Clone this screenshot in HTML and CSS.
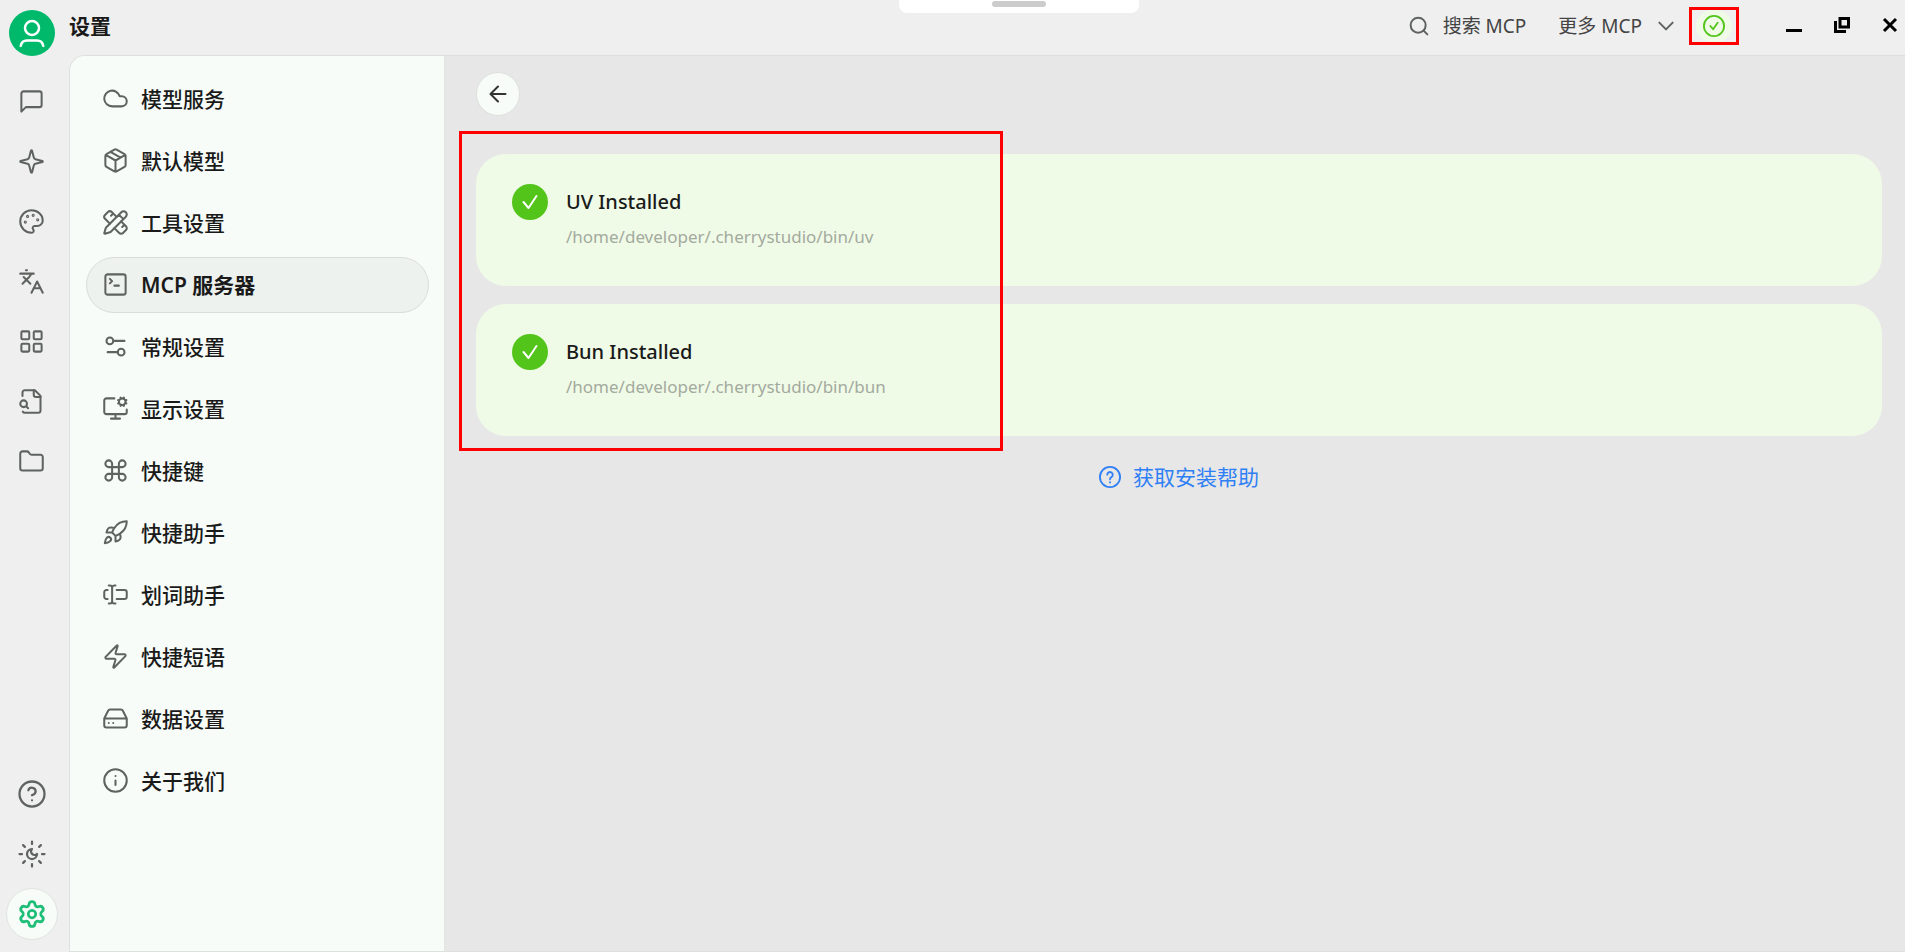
FILE: index.html
```html
<!DOCTYPE html>
<html lang="zh-CN">

<head>
	<title>设置</title>
	<meta charset="utf-8" />
	<meta name="viewport" content="width=device-width, initial-scale=1">
	<link rel="stylesheet" href="styles.css">
</head>

<body>
	<div class="pull-tab"><span class="pull-handle"></span></div>

	<!-- Left icon rail -->
	<aside class="rail">
		<button class="avatar" aria-label="用户">
			<svg viewBox="0 0 24 24"><circle cx="12" cy="8" r="5.6"/><path d="M3 22.300c.6-3 2.400-4.300 5-4.300h8c2.600 0 4.400 1.300 5 4.300"/></svg>
		</button>
		<nav class="rail-group">
			<a href="#" class="rail-item" aria-label="助手"><svg class="icon" viewBox="0 0 24 24"><path d="M21 15a2 2 0 0 1-2 2H7l-4 4V5a2 2 0 0 1 2-2h14a2 2 0 0 1 2 2z"/></svg></a>
			<a href="#" class="rail-item" aria-label="智能体"><svg class="icon" viewBox="0 0 24 24"><path d="M9.937 15.5A2 2 0 0 0 8.5 14.063l-6.135-1.582a.5.5 0 0 1 0-.962L8.5 9.936A2 2 0 0 0 9.937 8.5l1.582-6.135a.5.5 0 0 1 .963 0L14.063 8.5A2 2 0 0 0 15.5 9.937l6.135 1.581a.5.5 0 0 1 0 .964L15.5 14.063a2 2 0 0 0-1.437 1.437l-1.582 6.135a.5.5 0 0 1-.963 0z"/></svg></a>
			<a href="#" class="rail-item" aria-label="绘画"><svg class="icon" viewBox="0 0 24 24"><path d="M12 22a1 1 0 0 1 0-20 10 9 0 0 1 10 9 5 5 0 0 1-5 5h-2.25a1.75 1.75 0 0 0-1.4 2.8l.3.4a1.75 1.75 0 0 1-1.4 2.8z"/><circle cx="13.5" cy="6.5" r=".5"/><circle cx="17.5" cy="10.5" r=".5"/><circle cx="6.5" cy="12.5" r=".5"/><circle cx="8.5" cy="7.5" r=".5"/></svg></a>
			<a href="#" class="rail-item" aria-label="翻译"><svg class="icon" viewBox="0 0 24 24"><path d="m5 8 6 6M4 14l6-6 2-3M2 5h12M7 2h1M22 22l-5-10-5 10M14 18h6"/></svg></a>
			<a href="#" class="rail-item" aria-label="小程序"><svg class="icon" viewBox="0 0 24 24"><rect width="7" height="7" x="3" y="3" rx="1"/><rect width="7" height="7" x="14" y="3" rx="1"/><rect width="7" height="7" x="14" y="14" rx="1"/><rect width="7" height="7" x="3" y="14" rx="1"/></svg></a>
			<a href="#" class="rail-item" aria-label="知识库"><svg class="icon" viewBox="0 0 24 24"><path d="M14 2v4a2 2 0 0 0 2 2h4"/><path d="M4.268 21a2 2 0 0 0 1.727 1H18a2 2 0 0 0 2-2V7l-5-5H6a2 2 0 0 0-2 2v3"/><path d="m9 18-1.5-1.5"/><circle cx="5" cy="14" r="3"/></svg></a>
			<a href="#" class="rail-item" aria-label="文件"><svg class="icon" viewBox="0 0 24 24"><path d="M20 20a2 2 0 0 0 2-2V8a2 2 0 0 0-2-2h-7.9a2 2 0 0 1-1.69-.9L9.6 3.9A2 2 0 0 0 7.93 3H4a2 2 0 0 0-2 2v13a2 2 0 0 0 2 2Z"/></svg></a>
		</nav>
		<nav class="rail-group rail-bottom">
			<a href="#" class="rail-item" aria-label="帮助"><svg class="icon icon-lg" viewBox="0 0 24 24"><circle cx="12" cy="12" r="10"/><path d="M9.09 9a3 3 0 0 1 5.83 1c0 2-3 3-3 3M12 17h.01"/></svg></a>
			<button class="rail-item" aria-label="主题"><svg class="icon icon-lg" viewBox="0 0 24 24"><path d="M12 8a2.83 2.83 0 0 0 4 4 4 4 0 1 1-4-4M12 2v2M12 20v2M4.9 4.9l1.4 1.4M17.7 17.7l1.4 1.4M2 12h2M20 12h2M6.3 17.7l-1.4 1.4M19.1 4.9l-1.4 1.4"/></svg></button>
			<a href="#" class="rail-item active" aria-label="设置"><svg class="icon icon-lg" viewBox="0 0 24 24"><path d="M9.671 4.136a2.34 2.34 0 0 1 4.659 0 2.34 2.34 0 0 0 3.319 1.915 2.34 2.34 0 0 1 2.33 4.033 2.34 2.34 0 0 0 0 3.831 2.34 2.34 0 0 1-2.33 4.033 2.34 2.34 0 0 0-3.319 1.915 2.34 2.34 0 0 1-4.659 0 2.34 2.34 0 0 0-3.32-1.915 2.34 2.34 0 0 1-2.33-4.033 2.34 2.34 0 0 0 0-3.831A2.34 2.34 0 0 1 6.35 6.051a2.34 2.34 0 0 0 3.319-1.915"/><circle cx="12" cy="12" r="3"/></svg></a>
		</nav>
	</aside>

	<div class="window">
		<header class="topbar">
			<h1>设置</h1>
			<div class="top-actions">
				<button class="top-btn"><svg class="icon icon-sm" viewBox="0 0 24 24"><circle cx="11" cy="11" r="9"/><path d="m22 22-4.5-4.5"/></svg>搜索 MCP</button>
				<button class="top-btn">更多 MCP<svg class="icon icon-sm" viewBox="0 0 24 24"><path d="m4 8 8 8 8-8"/></svg></button>
				<div class="status-mark">
					<button class="status-btn" aria-label="已安装"><svg viewBox="0 0 24 24"><circle cx="12" cy="12" r="11"/><path d="m8 12 3 3.500 5-7"/></svg></button>
				</div>
			</div>
			<div class="win-controls">
				<button aria-label="最小化"><svg viewBox="0 0 16 16"><path d="M0 13.500h16"/></svg></button>
				<button aria-label="还原"><svg viewBox="0 0 16 16"><path d="M6 1.500h8.500V10H6zM1.500 4v10.500H12"/></svg></button>
				<button aria-label="关闭"><svg viewBox="0 0 16 16"><path d="m2 2 12 12M14 2 2 14"/></svg></button>
			</div>
		</header>

		<div class="content">
			<!-- Settings menu -->
			<nav class="menu">
				<a href="#"><svg class="icon" viewBox="0 0 24 24"><path d="M17.5 19H9a7 7 0 1 1 6.71-9h1.79a4.5 4.5 0 1 1 0 9Z"/></svg>模型服务</a>
				<a href="#"><svg class="icon" viewBox="0 0 24 24"><path d="M11 21.73a2 2 0 0 0 2 0l7-4A2 2 0 0 0 21 16V8a2 2 0 0 0-1-1.73l-7-4a2 2 0 0 0-2 0l-7 4A2 2 0 0 0 3 8v8a2 2 0 0 0 1 1.73zM12 22V12M3.29 7 12 12l8.71-5M7.5 4.27l9 5.15"/></svg>默认模型</a>
				<a href="#"><svg class="icon" viewBox="0 0 24 24"><path d="M13 7 8.7 2.7a2.41 2.41 0 0 0-3.4 0L2.7 5.3a2.41 2.41 0 0 0 0 3.4L7 13M8 6l2-2M18 16l2-2M17 11l4.3 4.3c.94.94.94 2.46 0 3.4l-2.6 2.6c-.94.94-2.46.94-3.4 0L11 17"/><path d="M21.174 6.812a1 1 0 0 0-3.986-3.987L3.842 16.174a2 2 0 0 0-.5.83l-1.321 4.352a.5.5 0 0 0 .623.622l4.353-1.32a2 2 0 0 0 .83-.497zM15 5l4 4"/></svg>工具设置</a>
				<a href="#" class="active"><svg class="icon" viewBox="0 0 24 24"><path d="m7 11 2-2-2-2M11 13h4"/><rect width="18" height="18" x="3" y="3" rx="2"/></svg>MCP 服务器</a>
				<a href="#"><svg class="icon" viewBox="0 0 24 24"><path d="M20 7h-9M14 17H5"/><circle cx="17" cy="17" r="3"/><circle cx="7" cy="7" r="3"/></svg>常规设置</a>
				<a href="#"><svg class="icon" viewBox="0 0 24 24"><path d="M12 17v4M8 21h8M22 13v2a2 2 0 0 1-2 2H4a2 2 0 0 1-2-2V5a2 2 0 0 1 2-2h7"/><path d="m14.305 7.53.923-.382M15.228 4.852l-.923-.383M16.852 3.228l-.383-.924M16.852 8.772l-.383.923M19.148 3.228l.383-.924M19.53 9.696l-.382-.924M20.772 4.852l.924-.383M20.772 7.148l.924.383"/><circle cx="18" cy="6" r="3"/></svg>显示设置</a>
				<a href="#"><svg class="icon" viewBox="0 0 24 24"><path d="M15 6v12a3 3 0 1 0 3-3H6a3 3 0 1 0 3 3V6a3 3 0 1 0-3 3h12a3 3 0 1 0-3-3"/></svg>快捷键</a>
				<a href="#"><svg class="icon" viewBox="0 0 24 24"><path d="M4.5 16.5c-1.5 1.26-2 5-2 5s3.74-.5 5-2c.71-.84.7-2.13-.09-2.91a2.18 2.18 0 0 0-2.91-.09zM12 15l-3-3a22 22 0 0 1 2-3.95A12.88 12.88 0 0 1 22 2c0 2.72-.78 7.5-6 11a22.35 22.35 0 0 1-4 2zM9 12H4s.55-3.03 2-4c1.62-1.08 5 0 5 0M12 15v5s3.03-.55 4-2c1.08-1.62 0-5 0-5"/></svg>快捷助手</a>
				<a href="#"><svg class="icon" viewBox="0 0 24 24"><path d="M12 20h-1a2 2 0 0 1-2-2 2 2 0 0 1-2 2H6M13 8h7a2 2 0 0 1 2 2v4a2 2 0 0 1-2 2h-7M5 16H4a2 2 0 0 1-2-2v-4a2 2 0 0 1 2-2h1M6 4h1a2 2 0 0 1 2 2 2 2 0 0 1 2-2h1M9 6v12"/></svg>划词助手</a>
				<a href="#"><svg class="icon" viewBox="0 0 24 24"><path d="M4 14a1 1 0 0 1-.78-1.63l9.9-10.2a.5.5 0 0 1 .86.46l-1.92 6.02A1 1 0 0 0 13 10h7a1 1 0 0 1 .78 1.63l-9.9 10.2a.5.5 0 0 1-.86-.46l1.92-6.02A1 1 0 0 0 11 14z"/></svg>快捷短语</a>
				<a href="#"><svg class="icon" viewBox="0 0 24 24"><path d="M22 12H2M5.45 5.11 2 12v6a2 2 0 0 0 2 2h16a2 2 0 0 0 2-2v-6l-3.45-6.89A2 2 0 0 0 16.76 4H7.24a2 2 0 0 0-1.79 1.11zM6 16h.01M10 16h.01"/></svg>数据设置</a>
				<a href="#"><svg class="icon" viewBox="0 0 24 24"><circle cx="12" cy="12" r="10"/><path d="M12 16v-4M12 8h.01"/></svg>关于我们</a>
			</nav>

			<main class="main">
				<button class="back" aria-label="返回"><svg class="icon icon-sm" viewBox="0 0 24 24"><path d="m12 21-9-9 9-9M21 12H3"/></svg></button>

				<section class="cards">
					<div class="card">
						<svg class="check" viewBox="0 0 36 36"><circle cx="18" cy="18" r="18"/><path d="m11.500 18 5 6 8-12"/></svg>
						<div>
							<h2>UV Installed</h2>
							<p>/home/developer/.cherrystudio/bin/uv</p>
						</div>
					</div>
					<div class="card">
						<svg class="check" viewBox="0 0 36 36"><circle cx="18" cy="18" r="18"/><path d="m11.500 18 5 6 8-12"/></svg>
						<div>
							<h2>Bun Installed</h2>
							<p>/home/developer/.cherrystudio/bin/bun</p>
						</div>
					</div>
					<div class="highlight"></div>
				</section>

				<a href="#" class="help-link"><svg viewBox="0 0 24 24"><circle cx="12" cy="12" r="11"/><path d="M9 9.500a3 3 0 1 1 4.500 2.700Q12 13 12 14.500M12 17.500v.5"/></svg>获取安装帮助</a>
			</main>
		</div>
	</div>
</body>

</html>
```

FILE: styles.css
```css
* {
	box-sizing: border-box;
}

html,
body {
	height: 100%;
	margin: 0;
}

body {
	display: flex;
	background-color: #efefef;
	color: #1a1a1a;
	font-family: "Noto Sans", "Noto Sans CJK SC", sans-serif;
	font-size: 21px;
}

button {
	padding: 0;
	border: none;
	background: none;
	color: inherit;
	font: inherit;
	cursor: pointer;
}

a {
	color: inherit;
	text-decoration: none;
}

h1,
h2,
p {
	margin: 0;
}

svg {
	display: block;
	flex: none;
	fill: none;
	stroke: currentColor;
	stroke-width: 2;
	stroke-linecap: round;
	stroke-linejoin: round;
}

.icon {
	width: 27px;
	height: 27px;
	stroke: #5f6360;
	stroke-width: 1.8;
}

.icon-sm {
	width: 20px;
	height: 20px;
	stroke-width: 2.4;
}

.icon-lg {
	width: 30px;
	height: 30px;
}

/* Tab hanging from the top edge of the screen */
.pull-tab {
	position: absolute;
	top: 0;
	left: 50%;
	width: 240px;
	height: 13px;
	margin-left: -54px;
	padding-top: 1px;
	border-radius: 0 0 8px 8px;
	background-color: #fff;
}

.pull-handle {
	display: block;
	width: 54px;
	height: 6px;
	margin: 0 auto;
	border-radius: 3px;
	background-color: #ccc;
}

/* Left rail */
.rail {
	display: flex;
	flex-direction: column;
	align-items: center;
	flex: none;
	width: 69px;
	padding: 10px 6px 12px 0;
}

.avatar {
	display: flex;
	align-items: center;
	justify-content: center;
	width: 46px;
	height: 46px;
	margin-bottom: 19px;
	border-radius: 50%;
	background-color: #00b96b;
	color: #fff;
}

.avatar svg {
	width: 30px;
	height: 30px;
}

.rail-group {
	display: flex;
	flex-direction: column;
	gap: 8px;
}

.rail-bottom {
	margin-top: auto;
}

.rail-item {
	display: flex;
	align-items: center;
	justify-content: center;
	width: 52px;
	height: 52px;
	border: 1px solid transparent;
	border-radius: 50%;
}

.rail-item.active {
	border-color: #e0e4e1;
	background-color: #f7fcf8;
}

.rail-item.active .icon {
	stroke: #1fbe78;
	stroke-width: 2.2;
}

/* Title bar */
.window {
	display: flex;
	flex-direction: column;
	flex: 1;
	min-width: 0;
}

.topbar {
	display: flex;
	align-items: center;
	height: 55px;
	padding: 0 7px 3px 0;
}

.topbar h1 {
	flex: 1;
	font-size: 21px;
	line-height: 30px;
	font-weight: bold;
}

.top-actions {
	display: flex;
	align-items: center;
	color: #444;
	font-size: 19px;
	line-height: 30px;
}

.top-btn {
	display: flex;
	align-items: center;
	gap: 14px;
	margin-right: 32px;
}

.top-btn + .top-btn {
	margin-right: 13px;
}

.status-mark {
	padding: 0 4px;
	border: 3px solid #f00;
}

.status-btn {
	display: flex;
	align-items: center;
	justify-content: center;
	width: 36px;
	height: 32px;
	border-radius: 16px;
	background-color: #f0fbe7;
	color: #52c41a;
}

.status-btn svg {
	width: 22px;
	height: 22px;
}

.win-controls {
	display: flex;
	gap: 32px;
	margin: 0 0 3px 47px;
	color: #000;
}

.win-controls svg {
	width: 16px;
	height: 16px;
	stroke-width: 3;
	stroke-linecap: butt;
	stroke-linejoin: miter;
}

/* Page body under the title bar */
.content {
	display: flex;
	flex: 1;
	overflow: hidden;
	border: 1px solid #dde0de;
	border-width: 1px 0 1px 1px;
	border-radius: 16px 0 0 0;
}

.menu {
	display: flex;
	flex-direction: column;
	gap: 6px;
	flex: none;
	width: 375px;
	padding: 15px 15px 15px 16px;
	border-right: 1px solid #e0e5e2;
	background-color: #f7fcf8;
}

.menu a {
	display: flex;
	align-items: center;
	gap: 12px;
	height: 56px;
	padding: 0 15px 2px;
	border: 1px solid transparent;
	border-radius: 28px;
	font-weight: 500;
}

.menu a.active {
	border-color: #d9dcda;
	background-color: #eef2ef;
	font-weight: 600;
}

.main {
	display: flex;
	flex-direction: column;
	flex: 1;
	padding: 16px 23px 0 31px;
	background-color: #e7e7e7;
}

.back {
	display: flex;
	align-items: center;
	justify-content: center;
	width: 44px;
	height: 44px;
	border: 1px solid #dcdfdd;
	border-radius: 50%;
	background-color: #f7fcf8;
}

.back .icon {
	stroke: #333;
}

.cards {
	position: relative;
	display: flex;
	flex-direction: column;
	gap: 18px;
	margin-top: 38px;
}

.card {
	display: flex;
	gap: 18px;
	height: 132px;
	padding: 30px 36px;
	border-radius: 30px;
	background-color: #f0fbe7;
}

.card h2 {
	font-size: 20px;
	line-height: 36px;
	font-weight: 500;
}

.card p {
	color: #a3aa9e;
	font-size: 17px;
	line-height: 34px;
}

.check {
	width: 36px;
	height: 36px;
	stroke: #fff;
}

.check circle {
	fill: #52c41a;
	stroke: none;
}

/* Red frame drawn over the cards */
.highlight {
	position: absolute;
	top: -23px;
	bottom: -15px;
	left: -17px;
	width: 544px;
	border: 3px solid #f00;
	pointer-events: none;
}

.help-link {
	display: flex;
	align-items: center;
	align-self: center;
	gap: 12px;
	margin-top: 25px;
	color: #2f7ff5;
	line-height: 32px;
}

.help-link svg {
	width: 22px;
	height: 22px;
}
```
